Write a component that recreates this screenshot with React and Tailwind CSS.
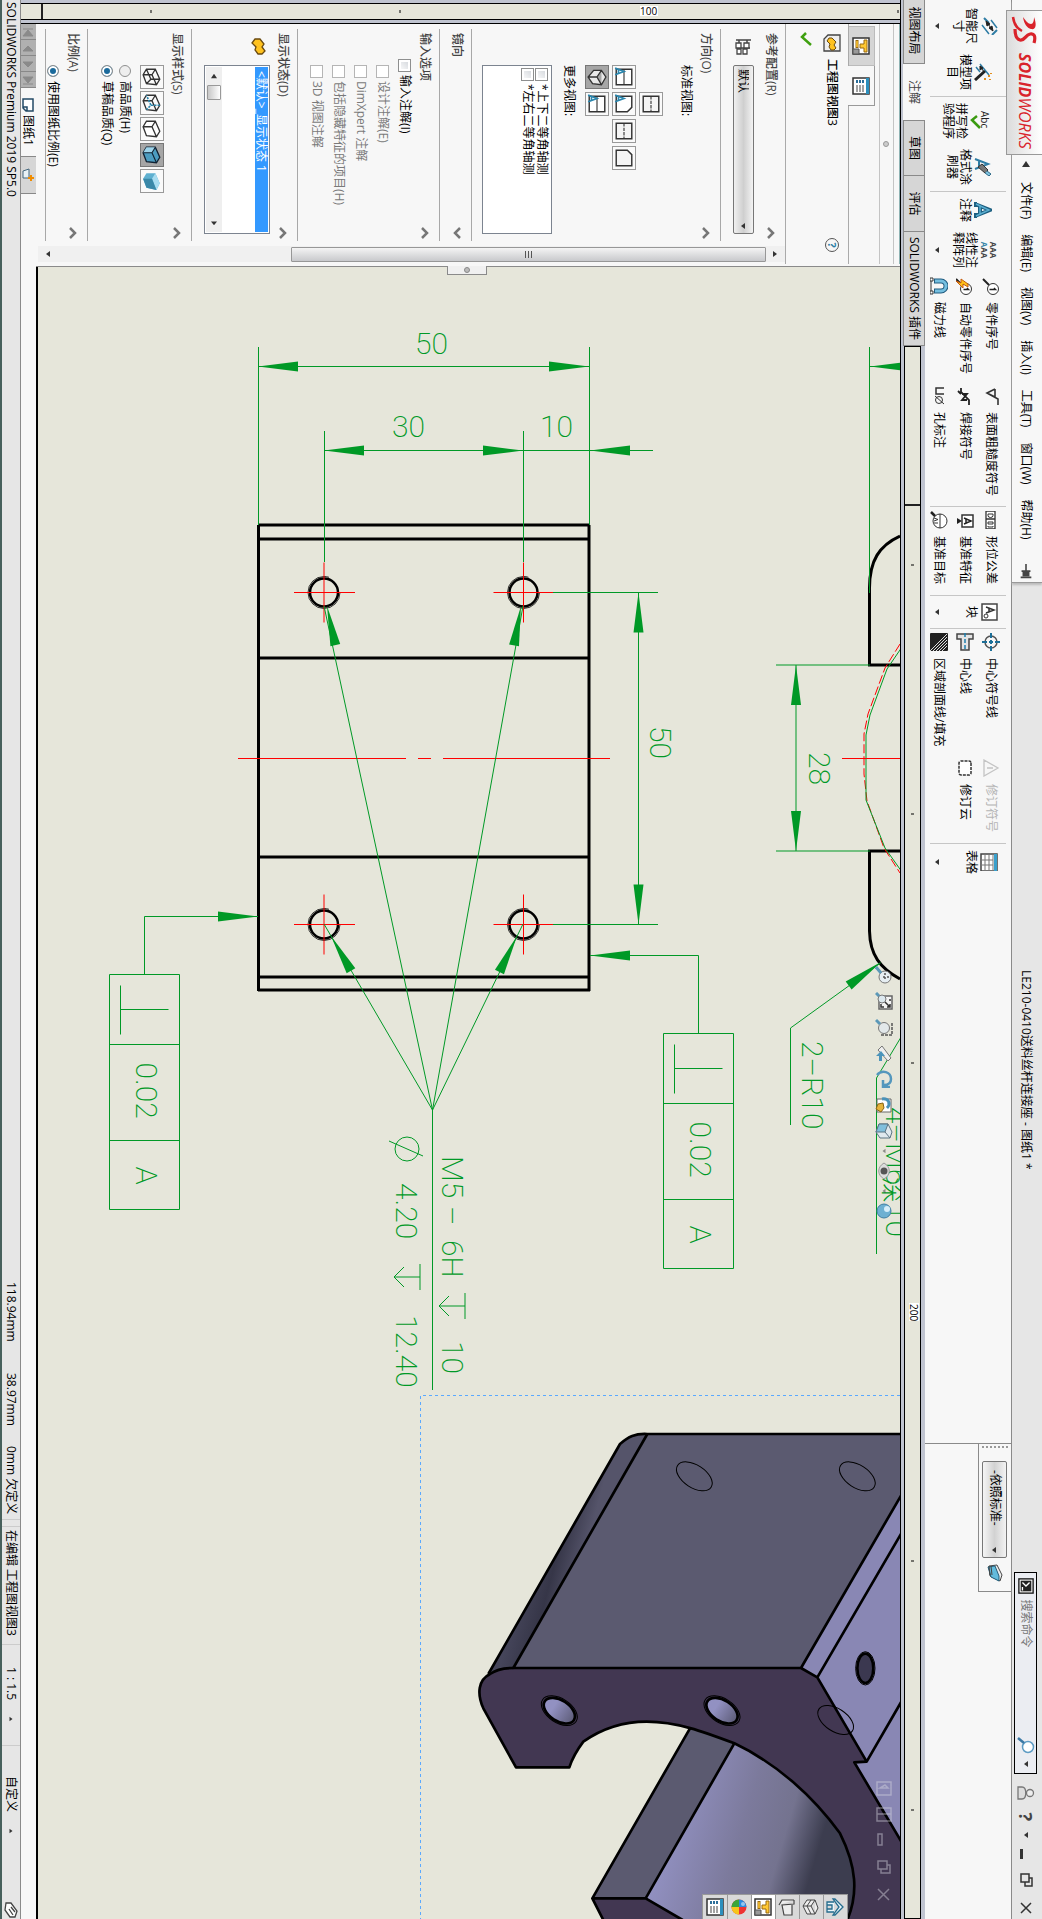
import React from "react";
import clsx from "clsx";

const ICONS = {
  dim: (
    <>
      <path d="M1 14L6 9M13 1l5 5" stroke="#2f7da5" strokeWidth="2" />
      <path d="M3 7l8-6M8 16l9-7" stroke="#2f7da5" strokeWidth="1.5" />
      <path d="M5 11L13 6M4 12l5-1-2-3zM14 5l-5 1 2 3z" stroke="#222" fill="#222" />
    </>
  ),
  wand: (
    <>
      <path d="M1 12L12 3M4 16l5-4" stroke="#2f7da5" strokeWidth="1.5" />
      <path d="M3 12l6-4M3 12l4 0-2-3z" stroke="#222" fill="#222" />
      <path d="M8 7l9 10" stroke="#222" strokeWidth="3" />
      <path d="M12 3h2M15 7h2M10 1h1M16 2h1" stroke="#e58f1c" strokeWidth="2" />
    </>
  ),
  brush: (
    <>
      <path d="M1 17L6 4l5 13M3 13h6" stroke="#2f7da5" strokeWidth="2" />
      <path d="M6 10l6-6 3 3-6 7z" fill="#777" stroke="#333" />
      <path d="M13 5l3-4 2 2-3 4" fill="#7fc3e0" stroke="#2f6a88" />
    </>
  ),
  bigA: (
    <>
      <path d="M1 17h5M12 17h5M3 17L9 2l6 15M5 12h8" stroke="#1d5f80" strokeWidth="4" />
      <path d="M3 16L9 3l6 13M5 12h8" stroke="#5aaed0" strokeWidth="1.5" />
    </>
  ),
  balloon: (
    <>
      <circle cx="12" cy="7" r="5.5" fill="#fff" stroke="#333" />
      <path d="M8 11L2 17" stroke="#222" strokeWidth="2" />
      <path d="M11 6l1.500-1.500v6" stroke="#222" strokeWidth="1.400" />
    </>
  ),
  autoBalloon: (
    <>
      <circle cx="12" cy="8" r="5.500" fill="#fff" stroke="#333" />
      <path d="M8 12L2 18" stroke="#222" strokeWidth="2" />
      <path d="M11 7l1.500-1.500v5" stroke="#222" strokeWidth="1.400" />
      <path d="M7 6l-5 7h4l-2 5 7-7H7l3-5z" fill="#ffc21a" stroke="#c35b12" />
    </>
  ),
  magnet: (
    <>
      <path d="M4 14V7a5 5 0 0110 0v7" stroke="#235d80" strokeWidth="5" />
      <path d="M4 13V7a5 5 0 0110 0v6" stroke="#74bfe0" strokeWidth="3" />
      <path d="M1 17h16" stroke="#333" />
      <path d="M1 15h3v3H1zM14 15h3v3h-3z" fill="#fff" stroke="#333" />
    </>
  ),
  roughness: <path d="M2 5h8L6 13 2 5M6 13L12 2h6" stroke="#333" strokeWidth="1.600" />,
  weld: <path d="M1 13h4l8-8h5M7 12V7l6 5V7M4 16l3-3" stroke="#222" strokeWidth="1.800" />,
  hole: (
    <>
      <path d="M1 4v8h6V4" stroke="#333" strokeWidth="1.500" />
      <circle cx="13" cy="9" r="3.500" stroke="#333" />
      <path d="M9 13l8-9" stroke="#333" />
    </>
  ),
  gtol: (
    <>
      <path d="M0 5h18v9H0zM8 5v9" fill="#fff" stroke="#333" strokeWidth="1.300" />
      <path d="M3 7v5h1.500a2 2.500 0 000-5zM11 7h2v5h-2zM15 7h1v5h-1" stroke="#333" />
    </>
  ),
  datum: (
    <>
      <path d="M4 1h12v11H4z" fill="#fff" stroke="#333" strokeWidth="1.500" />
      <path d="M7 10l3-7 3 7M8 8h4" stroke="#222" strokeWidth="1.500" />
      <path d="M10 12l-3 5h6z" fill="#222" />
    </>
  ),
  datumTarget: (
    <>
      <circle cx="10" cy="8" r="7" fill="#fff" stroke="#333" />
      <path d="M3 8h14M7 14l1.500-4 1.500 4M12 10v4" stroke="#333" />
      <path d="M5 13l-4 4" stroke="#222" strokeWidth="2.500" />
    </>
  ),
  block: (
    <>
      <path d="M1 1h16v15H1z" fill="#fff" stroke="#444" strokeWidth="1.500" />
      <path d="M4 12l3-8 3 8M5 9h4" stroke="#333" strokeWidth="1.500" />
      <circle cx="13" cy="12" r="2" stroke="#333" />
    </>
  ),
  centerMark: (
    <>
      <circle cx="9" cy="9" r="6" stroke="#555" strokeWidth="1.500" />
      <path d="M9 0v5M9 13v5M0 9h5M13 9h5M7 9h4M9 7v4" stroke="#1c6f98" strokeWidth="2" />
    </>
  ),
  centerLine: (
    <>
      <path d="M1 1h5v4h11v8H6v4H1z" fill="#e4e4e4" stroke="#444" strokeWidth="1.500" />
      <path d="M0 9h18" stroke="#1c7fae" strokeWidth="1.500" strokeDasharray="4 2" />
    </>
  ),
  hatch: (
    <>
      <rect width="18" height="18" rx="1" fill="#222" />
      <path d="M1 1l17 17M4 1l14 14M7 1l11 11M10 1l8 8M13 1l5 5" stroke="#ddd" strokeWidth="1" />
    </>
  ),
  revSymbol: <path d="M9 2l8 14H1zM9 7v6" stroke="#c4c4c4" strokeWidth="1.300" />,
  cloud: <rect x="2" y="3" width="14" height="12" rx="2" fill="#fff" stroke="#333" strokeWidth="1.500" strokeDasharray="3 1" />,
  table: (
    <>
      <rect x="1" y="1" width="17" height="16" fill="#fff" stroke="#444" strokeWidth="1.500" />
      <path d="M1 1h17v3H1z" fill="#3aa0cc" />
      <path d="M1 5h17M1 9h17M1 13h17M7 5v12M12 5v12" stroke="#777" />
    </>
  ),
  sheetView: (
    <>
      <rect x="1" y="1" width="16" height="16" fill="#fff" stroke="#333" strokeWidth="1.500" />
      <path d="M3 3h12v3h-4v4H7V6H3z" fill="#ffc832" stroke="#9a6a10" />
      <path d="M3 13h8" stroke="#9a6a10" strokeWidth="3" />
      <path d="M4 13h6" stroke="#ffc832" strokeWidth="1.500" />
      <path d="M12 11h5v6h-5z" fill="#999" stroke="#555" />
    </>
  ),
  props: (
    <>
      <rect x="1" y="1" width="16" height="16" fill="#fff" stroke="#333" strokeWidth="1.500" />
      <path d="M1 1h16v3H1z" fill="#2c8fbd" />
      <path d="M3 7h3M3 10h3M3 13h3" stroke="#2c6f9a" strokeWidth="2" />
      <path d="M8 7h7M8 10h7M8 13h7" stroke="#444" />
    </>
  ),
  part: (
    <path d="M2 8l5-4 3 2 4-3 3 3v4l-4 3-3-1-4 4-4-3z" fill="#ffc21f" stroke="#6a4a10" strokeWidth="1.300" />
  ),
  partView: (
    <>
      <path d="M1 1h16v16H5l-4-4z" fill="#eee" stroke="#444" strokeWidth="1.300" />
      <path d="M4 9l4-4 3 2 3-2 2 2v3l-3 2-3-1-3 3-3-2z" fill="#ffc21f" stroke="#6a4a10" />
    </>
  ),
  config: (
    <>
      <path d="M2 1v15M2 5h4M2 13h4M10 2v12" stroke="#444" strokeWidth="1.500" />
      <path d="M5 3h5v5H5zM5 11h5v5H5zM11 5h5v4h-5zM11 11h5v4h-5z" fill="#fff" stroke="#444" strokeWidth="1.300" />
    </>
  ),
  viewTop: (
    <>
      <path d="M2 2h14v14H2z" fill="#f4f4f4" stroke="#333" strokeWidth="1.300" />
      <path d="M2 9h14" stroke="#333" strokeDasharray="3 1" />
    </>
  ),
  viewA: (
    <>
      <path d="M2 2h14v14H2z" fill="#fff" stroke="#333" strokeWidth="1.300" />
      <path d="M2 9h14" stroke="#333" />
      <path d="M1 17l3-8 3 8M2 14h4" stroke="#2b86ad" strokeWidth="1.500" />
    </>
  ),
  viewFront: (
    <>
      <path d="M2 2h10l4 4v10H2z" fill="#fff" stroke="#333" strokeWidth="1.300" />
      <path d="M1 17l3-8 3 8M2 14h4" stroke="#2b86ad" strokeWidth="1.500" />
    </>
  ),
  viewCut: <path d="M6 2h10v14H2V6z" fill="#f4f4f4" stroke="#333" strokeWidth="1.300" />,
  iso: <path d="M9 1l7 4-1 8-6 4-6-5V5zM3 5l6 4 7-4M9 9v8" fill="#e8e8e8" stroke="#333" strokeWidth="1.200" />,
  cubeWire: <path d="M2 6l9-4 5 3-1 9-8 3-5-3zM2 6l5 3 9-4M7 9v8M11 2v8l4 4M11 10l-9 4" stroke="#333" strokeWidth="1.200" />,
  cubeDash: (
    <>
      <path d="M2 6l9-4 5 3-1 9-8 3-5-3zM2 6l5 3 9-4M7 9v8" stroke="#333" strokeWidth="1.200" />
      <path d="M11 2v8l4 4M11 10l-9 4" stroke="#2b86ad" strokeWidth="1.500" strokeDasharray="2 1" />
    </>
  ),
  cubePlain: <path d="M2 6l9-4 5 3-1 9-8 3-5-3zM2 6l5 3 9-4M7 9v8" fill="#fff" stroke="#333" strokeWidth="1.200" />,
  cubeEdge: (
    <>
      <path d="M2 6l9-4 5 3-1 9-8 3-5-3z" fill="#4c9cc0" stroke="#123" strokeWidth="1.200" />
      <path d="M2 6l5 3v8l-5-3z" fill="#9fd4ea" />
      <path d="M2 6l5 3 9-4M7 9v8" stroke="#123" />
    </>
  ),
  cubeShade: (
    <>
      <path d="M2 6l9-4 6 3-2 9-8 3-5-3z" fill="#5fb0d0" />
      <path d="M2 6l9-4 6 3-10 4z" fill="#a8dcf0" />
      <path d="M7 9l10-4-2 9-8 3z" fill="#3a88a8" />
    </>
  ),
  cubeStyle: (
    <>
      <path d="M2 5l8-4 6 2v10l-6 4-8-3z" fill="#dfe9ee" stroke="#5b7482" />
      <path d="M2 5l8 3v9l-8-3z" fill="#7fbfdc" stroke="#5b7482" />
      <path d="M10 8l6-5" stroke="#5b7482" />
    </>
  ),
  layers: (
    <>
      <path d="M1 7l10-5 6 2-5 10-10 1z" fill="#eee" stroke="#444" />
      <path d="M2 9l10-4 5 0-4 8-10 3z" fill="#62bbdc" stroke="#235d78" />
      <path d="M2 13l9-1M2 15l9-1" stroke="#444" />
    </>
  ),
  user: (
    <>
      <circle cx="9" cy="5" r="3.500" fill="#eee" stroke="#777" strokeWidth="1.300" />
      <path d="M3 17v-4c0-5 12-5 12 0v4z" fill="#ddd" stroke="#777" strokeWidth="1.300" />
    </>
  ),
  search: (
    <>
      <circle cx="10" cy="7" r="5.500" fill="#fff" stroke="#5e9cc4" strokeWidth="1.500" />
      <path d="M6 11l-5 6" stroke="#3c7aa6" strokeWidth="2.500" />
    </>
  ),
  prompt: (
    <>
      <rect x="1" y="1" width="16" height="16" fill="#fff" stroke="#111" strokeWidth="1.500" />
      <rect x="3" y="3" width="12" height="12" fill="#222" />
      <path d="M5 5l4 4-4 4M10 13h4" stroke="#fff" strokeWidth="1.500" />
    </>
  ),
  pin: <path d="M0 9h7M8 4v10M8 6h5v6H8zM15 3v12" stroke="#444" fill="#444" strokeWidth="1.800" />,
  home: <path d="M1 9l8-8 8 8v2L9 5l-8 6zM4 10v7h10v-7M7 17v-5h4v5" fill="#e9f6fb" stroke="#256c8d" strokeWidth="1.300" />,
  books: <path d="M2 5l8-3 6 3-8 4zM2 5v8l6 4 8-4V5M2 9l6 4 8-4M8 9v8" fill="#eee" stroke="#444" />,
  folder: <path d="M2 2h4l1 12 10-2V4H7M2 2v12l5 3" fill="#eee" stroke="#444" strokeWidth="1.200" />,
  ball: (
    <>
      <circle cx="9" cy="9" r="7.500" fill="#e33" />
      <path d="M9 9V1.500A7.500 7.500 0 001.500 9z" fill="#2a8adf" />
      <path d="M9 9H1.500A7.500 7.500 0 009 16.500z" fill="#3aa53a" />
      <path d="M9 9v7.500A7.500 7.500 0 0016.500 9z" fill="#f6c51c" />
      <circle cx="6" cy="5" r="2" fill="#fff" opacity=".5" />
    </>
  ),
  lens: (
    <>
      <circle cx="11" cy="8" r="6" fill="#e6eef2" stroke="#777" />
      <path d="M7 12L1 17" stroke="#5b98b8" strokeWidth="3" />
      <path d="M11 4v8M7 8h8" stroke="#555" strokeDasharray="2 2" strokeWidth="1.500" />
    </>
  ),
  fit: (
    <>
      <rect x="4" y="1" width="13" height="13" fill="#f3f3f3" stroke="#666" strokeWidth="1.500" />
      <path d="M10 8l5-5M15 9v3h-3M7 3h2M12 3h3v3" stroke="#333" strokeWidth="1.500" />
      <circle cx="7" cy="11" r="4" fill="#dce8ee" stroke="#777" />
      <path d="M4 14L1 17" stroke="#5b98b8" strokeWidth="3" />
    </>
  ),
  area: (
    <>
      <path d="M5 1h12v12" stroke="#555" strokeWidth="1.500" strokeDasharray="3 1" />
      <circle cx="10" cy="9" r="5.500" fill="#e2e8ea" stroke="#777" />
      <path d="M6 13l-4 4" stroke="#5b98b8" strokeWidth="3" />
    </>
  ),
  prev: (
    <>
      <path d="M2 11L14 2l3 3L6 15z" fill="#eee" stroke="#777" />
      <path d="M17 14h-5v3l-5-5 5-4v3h5z" fill="#4c94ba" />
    </>
  ),
  rotate: <path d="M5 16c-6-5-3-14 4-14 4 0 6 3 6 7M17 3v7h-7" stroke="#5497bd" strokeWidth="2.500" />,
  view3d: (
    <>
      <path d="M3 2h13v14H3z" fill="#fff" stroke="#666" />
      <path d="M3 11c-1-7 5-9 9-5" stroke="#4a92b8" strokeWidth="3" />
      <path d="M7 10l5-1 4 3-3 5-5-2z" fill="#e5b43c" stroke="#8a6414" />
    </>
  ),
  eye: (
    <>
      <path d="M1 9c4-7 12-7 16 0-4 7-12 7-16 0z" fill="#ddd" stroke="#999" />
      <circle cx="9" cy="9" r="3.500" fill="#555" />
    </>
  ),
  sphere: (
    <>
      <circle cx="9" cy="9" r="7" fill="#6db0d2" stroke="#3f7fa3" />
      <circle cx="7" cy="6" r="3" fill="#d6eefa" />
    </>
  ),
};

function Icon({ name, className = "size-[18px]" }) {
  return (
    <svg viewBox="0 0 18 18" fill="none" className={clsx("block shrink-0", className)} aria-hidden="true">
      {ICONS[name]}
    </svg>
  );
}

function Caret({ dir = "down", className = "size-2" }) {
  const paths = { down: "M1 2h6L4 6z", up: "M1 6h6L4 2z", left: "M7 0v8L1 4z", right: "M2 0v8l5-4z" };
  return (
    <svg viewBox="0 0 8 8" className={clsx("block shrink-0 fill-[#333]", className)} aria-hidden="true">
      <path d={paths[dir]} />
    </svg>
  );
}

const MENUS = ["文件(F)", "编辑(E)", "视图(V)", "插入(I)", "工具(T)", "窗口(W)", "帮助(H)"];

function TitleBar() {
  return (
    <header className="flex h-[31px] shrink-0 items-stretch border-b border-[#8a8a8a] bg-[#e6e6e6]">
      <div className="flex w-[583px] items-center border-r border-[#999] bg-[#f7f7f7] pt-[2px] pl-[10px] shadow-[2px_0_2px_#bbb]">
        <div className="z-10 mb-[-3px] flex h-[36px] w-[145px] items-center gap-[9px] border border-t-0 border-[#999] bg-linear-to-b from-white to-[#dcdcdc] pl-[5px]">
          <svg viewBox="0 0 28 27" fill="none" className="h-[27px] w-7" aria-hidden="true">
            <path d="M1 4c8-3 13-2 12 3-1 4-5 7-12 8 4-3 7-5 7-8 0-2-3-3-7-3z" fill="#d9232b" />
            <path d="M1 25c8-1 12-5 14-9" stroke="#d9232b" strokeWidth="2.500" />
            <path d="M27 4c-7-2-10 0-9 4 1 5 7 5 6 10-1 4-5 5-11 5" stroke="#d9232b" strokeWidth="3.200" />
          </svg>
          <span className="text-[16px] leading-none text-[#d9232b] italic [font-family:'Open_Sans',sans-serif]">
            <b>SOLID</b>WORKS
          </span>
        </div>
        <Caret dir="left" className="ml-[5px] h-3 w-2" />
        <nav className="ml-[14px] flex gap-[15px]">
          {MENUS.map((m) => (
            <button key={m} type="button" className="whitespace-nowrap">
              {m}
            </button>
          ))}
        </nav>
        <button type="button" aria-label="固定" className="ml-6">
          <Icon name="pin" className="size-4" />
        </button>
      </div>
      <div className="flex flex-1 items-center justify-end gap-[10px] pt-[2px] pr-1">
        <h1 className="mr-auto ml-[387px] whitespace-nowrap">LE210-0410送料丝杆连接座 - 图纸1 *</h1>
        <label className="flex h-[23px] w-[202px] items-center gap-[5px] border border-black bg-[#ebedf2] px-[5px]">
          <Icon name="prompt" className="size-4" />
          <input aria-label="搜索命令" placeholder="搜索命令" className="min-w-0 flex-1 outline-none placeholder:text-[#777]" />
          <Icon name="search" />
          <Caret />
        </label>
        <button type="button" aria-label="登录">
          <Icon name="user" />
        </button>
        <button type="button" className="text-[18px] leading-none font-bold text-[#444]">
          ?
        </button>
        <Caret />
        <button type="button" aria-label="最小化" className="mt-2 h-[3px] w-[10px] bg-[#333]" />
        <button type="button" aria-label="还原" className="ml-1">
          <svg viewBox="0 0 14 14" fill="none" stroke="#333" strokeWidth="1.500" className="size-[14px]">
            <path d="M1 4h8v8H1zM5 4V1h8v7H9" />
          </svg>
        </button>
        <button type="button" aria-label="关闭" className="ml-1">
          <svg viewBox="0 0 14 14" fill="none" stroke="#333" strokeWidth="1.500" className="size-[14px]">
            <path d="M2 2l10 10M12 2L2 12" />
          </svg>
        </button>
      </div>
    </header>
  );
}

function BigTool({ icon, text, drop, width = "w-9", children }) {
  return (
    <button type="button" className={clsx("flex shrink-0 flex-col items-center", width, drop ? "pt-[13px]" : "pt-[19px]")}>
      {children || <Icon name={icon} />}
      <span className="mt-[2px] leading-[13px] whitespace-pre">{text}</span>
      {drop && <Caret className="mt-auto mb-2 size-2" />}
    </button>
  );
}

function ToolColumn({ items, className }) {
  return (
    <div className={clsx("flex shrink-0 flex-col pt-[7px]", className)}>
      {items.map(([icon, label, off]) => (
        <button
          key={label}
          type="button"
          disabled={!!off}
          className="flex h-[26px] items-center gap-[7px] whitespace-nowrap disabled:text-[#b5b5b5]"
        >
          <Icon name={icon} />
          {label}
        </button>
      ))}
    </div>
  );
}

function Sep({ className }) {
  return <div className={clsx("my-[5px] w-px shrink-0 bg-[#c6c6c6]", className)} />;
}

function Ribbon() {
  return (
    <div className="flex h-[86px] shrink-0 items-start bg-[#f7f7f7]">
      <div className="flex h-full w-[1444px] items-stretch border-r border-[#8a8a8a] pl-2">
        <BigTool icon="dim" text={"智能尺\n寸"} drop />
        <div className="w-[10px]" />
        <BigTool icon="wand" text={"模型项\n目"} />
        <Sep className="mx-[6px]" />
        <BigTool text={"拼写检\n验程序"}>
          <svg viewBox="0 0 28 22" className="h-[22px] w-7" fill="none">
            <text x="4" y="11" fontSize="10" fill="#222">
              Abc
            </text>
            <path d="M9 15l4 5 8-8" stroke="#3b9b12" strokeWidth="2.500" />
          </svg>
        </BigTool>
        <div className="w-[10px]" />
        <BigTool icon="brush" text={"格式涂\n刷器"} />
        <Sep className="mx-[6px]" />
        <BigTool icon="bigA" text="注释" width="w-6" />
        <div className="w-[10px]" />
        <BigTool text={"线性注\n释阵列"} drop>
          <span className="flex h-[18px] flex-col items-center text-[8px] leading-[9px] font-bold text-[#444]">
            AAA
            <span>
              <span className="text-[#3a86a8]">A</span>AA
            </span>
          </span>
        </BigTool>
        <ToolColumn
          className="ml-[9px] w-[110px]"
          items={[["balloon", "零件序号"], ["autoBalloon", "自动零件序号"], ["magnet", "磁力线"]]}
        />
        <ToolColumn
          className="w-[118px]"
          items={[["roughness", "表面粗糙度符号"], ["weld", "焊接符号"], ["hole", "孔标注"]]}
        />
        <Sep className="ml-[1px]" />
        <ToolColumn className="ml-1 w-[84px]" items={[["gtol", "形位公差"], ["datum", "基准特征"], ["datumTarget", "基准目标"]]} />
        <Sep />
        <BigTool icon="block" text="块" width="w-8" drop />
        <Sep />
        <ToolColumn
          className="ml-1 w-[126px]"
          items={[["centerMark", "中心符号线"], ["centerLine", "中心线"], ["hatch", "区域剖面线/填充"]]}
        />
        <ToolColumn className="w-[84px]" items={[["revSymbol", "修订符号", true], ["cloud", "修订云"]]} />
        <Sep />
        <BigTool icon="table" text="表格" width="w-9" drop />
      </div>
      <div className="flex h-[33px] w-[148px] items-center border-r border-b border-[#8a8a8a] pl-[2px]">
        <div className="mr-3 h-[26px] w-[3px] border-l-2 border-dotted border-[#999]" />
        <div className="relative">
          <select
            aria-label="图层"
            className="block h-[25px] w-[97px] appearance-none rounded-[2px] border border-[#777] bg-linear-to-b from-[#f3f3f3] via-[#d2d2d2] to-[#f5f5f5] pl-2"
          >
            <option>-依照标准-</option>
          </select>
          <Caret className="pointer-events-none absolute top-[9px] right-1 size-2" />
        </div>
        <button type="button" aria-label="图层属性" className="ml-[6px]">
          <Icon name="layers" />
        </button>
      </div>
    </div>
  );
}

const TABS = ["视图布局", "注解", "草图", "评估", "SOLIDWORKS 插件"];
const TICKS = [218, 467, 716, 965, 1214, 1463];

function TabStrip() {
  return (
    <div className="flex h-[25px] shrink-0 border-b border-black bg-[#c0c4d0]">
      <div role="tablist" className="mb-[2px] flex h-[22px] shrink-0">
        {TABS.map((t, i) => (
          <button
            key={t}
            type="button"
            role="tab"
            aria-selected={i === 1}
            className={clsx(
              "flex items-center justify-center whitespace-nowrap",
              i === 1 ? "w-14 bg-[#f7f7f7] text-[#444]" : "border-r border-b border-t border-[#8a8a8a] bg-[#d6d6d6]",
              i === 0 && "w-16 pr-[2px]",
              (i === 2 || i === 3) && "w-14",
              i === 2 && "border-l",
              i === 4 && "w-[114px]"
            )}
          >
            {t}
          </button>
        ))}
      </div>
      <div className="mt-1 mb-[3px] h-[17px] flex-1 border border-black bg-[#e6e6da]">
        <svg className="block h-[15px] w-full" aria-hidden="true">
          <path d="M158 0v15" stroke="#222" strokeWidth="2" />
          {TICKS.map((x) => (
            <path key={x} d={`M${x} 6v3`} stroke="#000" />
          ))}
          <rect x="956" y="1" width="18" height="10" fill="#fff" />
          <text x="957" y="10" fontSize="10">
            200
          </text>
        </svg>
      </div>
    </div>
  );
}

function SideRuler() {
  return (
    <div className="flex w-6 shrink-0 border-r border-black bg-[#c0c4d0] pr-[3px] pl-[3px]">
      <div className="w-[17px] border-x border-black bg-[#e6e6da]">
        <svg className="block h-full w-[15px]" aria-hidden="true">
          <path d="M6 2h3M6 251h3M6 500h3M6 749h3" stroke="#000" />
          <path d="M0 858h15" stroke="#222" strokeWidth="2" />
          <rect x="2" y="242" width="10" height="18" fill="#fff" />
          <text transform="translate(11 260) rotate(-90)" fontSize="10">
            100
          </text>
        </svg>
      </div>
    </div>
  );
}

function Section({ title, closed, className, children }) {
  return (
    <section className={clsx("mx-[5px] border-b border-[#a8a8a8]", className)}>
      <h3 className="flex h-[27px] items-center justify-between pr-[2px] pl-1 font-medium text-[#444]">
        {title}
        <svg viewBox="0 0 12 12" fill="none" stroke="#777" strokeWidth="2.500" className="size-3">
          <path d={closed ? "M1 3l5 5 5-5" : "M1 9l5-5 5 5"} />
        </svg>
      </h3>
      {children}
    </section>
  );
}

function Check({ label, disabled }) {
  return (
    <label className={clsx("flex h-[14px] items-center gap-[3px] whitespace-nowrap", disabled && "text-[#7a7a7a]")}>
      <input
        type="checkbox"
        disabled={disabled}
        className={clsx(
          "size-[13px] shrink-0 appearance-none border bg-linear-to-br",
          disabled ? "border-[#b5b5b5] from-white to-white" : "border-[#8e8f8f] from-[#cfd3d8] to-white shadow-[inset_0_0_0_2px_#fff]"
        )}
      />
      {label}
    </label>
  );
}

function Radio({ name, label, checked }) {
  return (
    <label className="flex h-[14px] items-center gap-1 whitespace-nowrap">
      <input
        type="radio"
        name={name}
        defaultChecked={checked}
        className="size-3 shrink-0 appearance-none rounded-full border border-[#8e8f8f] bg-[#eee] checked:bg-[#1a6a9c] checked:shadow-[inset_0_0_0_2px_#fff]"
      />
      {label}
    </label>
  );
}

function IconButton({ icon, label, active }) {
  return (
    <button
      type="button"
      aria-label={label}
      className={clsx(
        "flex size-6 items-center justify-center border",
        active ? "border-[#777] bg-[#a6a6a6]" : "border-[#999] bg-[#fafafa]"
      )}
    >
      <Icon name={icon} className="size-5" />
    </button>
  );
}

function PropertyPanel() {
  return (
    <aside className="flex w-[243px] shrink-0 flex-col border-r border-[#8a8a8a] bg-[#f7f7f7] pr-[2px]">
      <div className="h-[6px] border-t border-[#8fb4b4]" />
      <div className="flex h-[15px] items-center justify-center border-y border-[#c4c4c4]">
        <span className="size-[6px] rounded-full border border-[#999] bg-[#ccc]" />
      </div>
      <div className="mt-1 flex h-[27px] border-b border-[#aaa] pl-[2px]">
        <button type="button" aria-label="工程图" className="flex w-10 items-center justify-center border border-b-0 border-[#bbb] bg-[#d5d5d5]">
          <Icon name="sheetView" />
        </button>
        <button
          type="button"
          aria-label="属性"
          className="-mb-px flex w-10 items-center justify-center border-t border-r border-[#999] bg-[#f7f7f7]"
        >
          <Icon name="props" />
        </button>
      </div>
      <div className="h-[63px] border-b border-[#aaa] pr-3 pl-2">
        <div className="flex h-[31px] items-center gap-[7px] pl-[2px]">
          <Icon name="partView" />
          <h2 className="font-medium">工程图视图3</h2>
          <button
            type="button"
            className="ml-auto flex size-[14px] items-center justify-center rounded-full border border-[#555] text-[11px] leading-none font-bold text-[#2f7da5]"
          >
            ?
          </button>
        </div>
        <button type="button" aria-label="确定" className="mt-[5px] block">
          <svg viewBox="0 0 14 12" fill="none" stroke="#3fa010" strokeWidth="2.500" className="h-3 w-[14px]">
            <path d="M1 6l4 4 8-9" />
          </svg>
        </button>
      </div>

      <div className="flex min-h-0 flex-1">
        <div className="h-full w-[222px] overflow-hidden">
          <Section title="参考配置(R)" className="pb-3">
            <div className="flex items-center gap-[9px] pt-1 pl-[9px]">
              <Icon name="config" />
              <div className="relative">
                <select
                  aria-label="参考配置"
                  className="block h-[21px] w-[169px] appearance-none rounded-[2px] border border-[#777] bg-linear-to-b from-[#f3f3f3] via-[#cfcfcf] to-[#f0f0f0] pl-[3px] leading-none"
                >
                  <option>默认</option>
                </select>
                <Caret className="pointer-events-none absolute top-[7px] right-1 size-2" />
              </div>
            </div>
          </Section>

          <Section title="方向(O)" className="pb-[10px]">
            <div className="pl-9">
              <p className="leading-[14px]">标准视图:</p>
              <div className="mt-4 grid w-max grid-cols-4 gap-[3px]">
                <span />
                <IconButton icon="viewTop" label="上视" />
                <span />
                <span />
                <IconButton icon="viewA" label="左视" />
                <IconButton icon="viewFront" label="前视" />
                <IconButton icon="viewTop" label="右视" />
                <IconButton icon="viewCut" label="后视" />
                <IconButton icon="iso" label="等轴测" active />
                <IconButton icon="viewA" label="下视" />
              </div>
              <p className="mt-[9px] leading-[14px]">更多视图:</p>
              <div className="mt-[10px] flex h-[70px] w-[169px] flex-col border border-[#7c8490] bg-white pt-[2px] pl-[2px]">
                <Check label="*上下二等角轴测" />
                <Check label="*左右二等角轴测" />
              </div>
            </div>
          </Section>

          <Section title="镜向" closed className="pb-1" />

          <Section title="输入选项" className="pb-3">
            <div className="flex flex-col gap-2 pl-9">
              <div className="-ml-[6px]">
                <Check label="输入注解(I)" />
              </div>
              <Check label="设计注解(E)" disabled />
              <Check label="DimXpert 注解" disabled />
              <Check label="包括隐藏特征的项目(H)" disabled />
              <Check label="3D 视图注解" disabled />
            </div>
          </Section>

          <Section title="显示状态(D)" className="pb-3">
            <div className="flex gap-[10px] pl-2">
              <Icon name="part" className="mt-[2px] size-[18px]" />
              <div className="flex h-[66px] w-[169px] flex-col border border-[#7c8490] bg-white p-px">
                <div className="bg-[#3399ff] pl-1 leading-[13px] whitespace-pre text-white">{"<默认>_显示状态 1"}</div>
                <div className="mt-auto flex h-4 items-center bg-[#efefef] px-[6px]">
                  <Caret dir="left" className="size-[6px]" />
                  <span className="ml-[6px] h-[14px] w-[15px] rounded-[1px] border border-[#999] bg-linear-to-b from-white to-[#c8c8c8]" />
                  <Caret dir="right" className="ml-auto size-[6px]" />
                </div>
              </div>
            </div>
          </Section>

          <Section title="显示样式(S)" className="pb-3">
            <div className="pl-9">
              <div className="flex gap-[2px]">
                <IconButton icon="cubeWire" label="线架图" />
                <IconButton icon="cubeDash" label="隐藏线可见" />
                <IconButton icon="cubePlain" label="消除隐藏线" />
                <IconButton icon="cubeEdge" label="带边线上色" active />
                <IconButton icon="cubeShade" label="上色" />
              </div>
              <div className="mt-2 flex flex-col gap-1">
                <Radio name="quality" label="高品质(H)" />
                <Radio name="quality" label="草稿品质(Q)" checked />
              </div>
            </div>
          </Section>

          <Section title="比例(A)">
            <div className="flex flex-col gap-1 pl-9">
              <Radio name="scale" label="使用图纸比例(E)" checked />
            </div>
          </Section>
        </div>
        <div className="flex w-4 flex-col items-center bg-[#f0f0f0] py-[6px]">
          <Caret dir="up" />
          <div className="mt-[5px] flex h-[475px] w-[15px] flex-col items-center justify-center gap-[2px] rounded-[1px] border border-[#979797] bg-linear-to-r from-[#f4f4f4] to-[#c8c9cc]">
            <span className="h-px w-[7px] bg-[#555]" />
            <span className="h-px w-[7px] bg-[#555]" />
            <span className="h-px w-[7px] bg-[#555]" />
          </div>
          <Caret className="mt-auto size-2" />
        </div>
      </div>
      <div className="h-[2px]" />
    </aside>
  );
}

const GREEN = "#009926";

// arrow head with its tip at (x, y); a is where the tip points, 0 = right
function Arrow({ x, y, a }) {
  return <path transform={`translate(${x} ${y}) rotate(${a})`} d="M0 0L-40-5v10z" fill={GREEN} stroke="none" />;
}

function Label({ x, y, turn, children }) {
  return (
    <text
      transform={`translate(${x} ${y}) rotate(${turn ? 90 : 0})`}
      fill={GREEN}
      stroke="none"
      fontSize="30"
      fontWeight="200"
      fontFamily="Roboto"
    >
      {children}
    </text>
  );
}

function TappedHole({ x, y }) {
  return (
    <g>
      <circle cx={x} cy={y} r="14" stroke="#000" strokeWidth="2.500" />
      <circle cx={x} cy={y} r="16" stroke="#000" strokeWidth=".8" strokeDasharray="80 20" />
      <path d={`M${x - 30} ${y}h61M${x} ${y - 30}v60`} stroke="red" />
    </g>
  );
}

function TolFrame({ x, y }) {
  return (
    <g>
      <path d={`M${x} ${y}h70v235h-70zM${x} ${y + 70}h70M${x} ${y + 166}h70`} stroke={GREEN} />
      <path d={`M${x + 11} ${y + 11}v49M${x + 11} ${y + 35}h48`} stroke={GREEN} />
      <Label x={x + 26} y={y + 88} turn>
        0.02
      </Label>
      <Label x={x + 26} y={y + 192} turn>
        A
      </Label>
    </g>
  );
}

function DepthMark({ x, y }) {
  return <path d={`M${x + 26} ${y - 13}v26M${x + 26} ${y}h-26M${x + 10} ${y - 10}l-10 10 10 10`} stroke={GREEN} />;
}

function TopView() {
  return (
    <g fill="none">
      <path d="M258 525h332M258 539h332M258 658h332M258 857h332M258 977h332M258 990h332M258.500 525v466M589 525v466" stroke="#000" strokeWidth="3" />
      <TappedHole x={324} y={592.5} />
      <TappedHole x={523.5} y={592.5} />
      <TappedHole x={324} y={924.5} />
      <TappedHole x={523.5} y={924.5} />
      <path d="M238 758.500h168M418 758.500h13M443 758.500h167" stroke="red" />
      <g stroke={GREEN}>
        <path d="M258.500 347v178M589.500 347v178M258 366.500h331M324.500 431v131M523.500 431v131M324 450.500h329" />
        <path d="M553 592.500h105M553 924.500h105M638.500 592v332" />
        <path d="M324 606L432.500 1110 523 606M324 924L432.500 1110 523 924M432.500 1110v280" />
        <path d="M144.500 974.500v-58H258M698.500 1033v-77.500H590" />
      </g>
      <Arrow x={258} y={366.5} a={180} />
      <Arrow x={589} y={366.5} a={0} />
      <Arrow x={324} y={450.5} a={180} />
      <Arrow x={523} y={450.5} a={0} />
      <Arrow x={590} y={450.5} a={180} />
      <Arrow x={638.5} y={592.5} a={-90} />
      <Arrow x={638.5} y={924.5} a={90} />
      <Arrow x={327} y={606} a={-102} />
      <Arrow x={521} y={606} a={-80} />
      <Arrow x={331} y={936} a={-120} />
      <Arrow x={517} y={936} a={-64} />
      <Arrow x={258} y={916.5} a={0} />
      <Arrow x={590} y={955.5} a={180} />
      <Label x={415} y={354}>50</Label>
      <Label x={392} y={437}>30</Label>
      <Label x={540} y={437}>10</Label>
      <Label x={650} y={726} turn>50</Label>
      <TolFrame x={109.5} y={974.5} />
      <TolFrame x={663.5} y={1033.5} />
      <Label x={442} y={1156} turn>M5</Label>
      <Label x={442} y={1206} turn>–</Label>
      <Label x={442} y={1240} turn>6H</Label>
      <DepthMark x={439} y={1306} />
      <Label x={442} y={1341} turn>10</Label>
      <ellipse cx="407" cy="1149" rx="12" ry="12" stroke={GREEN} />
      <path d="M389 1141l34 15" stroke={GREEN} />
      <Label x={396} y={1183} turn>4.20</Label>
      <DepthMark x={394} y={1277} />
      <Label x={396} y={1315} turn>12.40</Label>
    </g>
  );
}

function FrontView() {
  return (
    <g fill="none">
      <path d="M900 536C880 545 869 560 869.500 590v75H901M901 851H869.500v80C870 955 880 968 900 979" stroke="#000" strokeWidth="3" />
      <path d="M869.500 347v246M869 366.500h31M776 665h94M776 851h94M796 665v186" stroke={GREEN} />
      <path d="M900 644l-15 24-17 46-4 20v40l3 27 17 47 16 25" stroke="red" strokeDasharray="9 3" />
      <path d="M902 647l-15 22-17 46-4 20v65l19 48 17 24" stroke={GREEN} />
      <path d="M842 758.500h58" stroke="red" />
      <Arrow x={870} y={366.5} a={180} />
      <Arrow x={796} y={665} a={-90} />
      <Arrow x={796} y={851} a={90} />
      <Label x={809} y={752} turn>28</Label>
      <path d="M790.500 1125v-97l90-65M876.500 1254v-176l24-40" stroke={GREEN} />
      <Arrow x={881} y={962} a={-36} />
      <Label x={802} y={1041} turn>2–R10</Label>
      <g clipPath="url(#sheet)">
        <Label x={886} y={1107} turn>4–M6</Label>
        <text transform="translate(884 1177) rotate(90)" fill={GREEN} fontSize="26" fontWeight="300" fontFamily="Noto Sans CJK SC">
          深
        </text>
        <Label x={886} y={1204} turn>10</Label>
      </g>
    </g>
  );
}

function IsoView() {
  return (
    <g transform="translate(440 1400) scale(.33333)" strokeLinejoin="round">
      <path d="M750 985L883 1030 617 1495H457z" fill="#5b5a70" />
      <path d="M883 1030C1010 1090 1120 1190 1200 1300C1250 1400 1255 1480 1222 1560H728L617 1495z" fill="url(#bore)" />
      <path d="M457 1495H617L728 1560H490z" fill="#423752" />
      <path d="M622 102H1384V285L1083 804H220z" fill="#5b5a70" />
      <path d="M622 102C585 100 565 110 540 132L145 822C170 806 200 804 220 804z" fill="url(#fillet)" />
      <path d="M1384 285L1083 804 1132 832 1280 1085 1243 1087 1384 1325z" fill="#8987b4" />
      <path
        d="M220 804H1083L1132 832 1280 1085 1243 1087 1384 1325V1560H1222C1255 1480 1250 1400 1200 1300C1120 1190 1010 1090 883 1030C790 995 710 965 620 965C540 965 480 990 430 1025Q400 1065 388 1102H228L130 925C110 880 115 840 150 822Q175 804 220 804z"
        fill="#423752"
      />
      <g fill="none" stroke="#000" strokeWidth="8">
        <path d="M1384 102H622C585 100 565 110 540 132L145 822" />
        <path d="M622 102L220 804H1083L1384 285M1083 804L1132 832 1384 400M1132 832L1280 1085 1384 905M1280 1085L1243 1087 1384 1325" />
        <path d="M220 804Q175 804 150 822C115 840 110 880 130 925L228 1102H388Q400 1065 430 1025C480 990 540 965 620 965C710 965 790 995 883 1030C1010 1090 1120 1190 1200 1300C1250 1400 1255 1480 1222 1560" />
        <path d="M750 985L457 1495H617L883 1030M617 1495L728 1560M457 1495L490 1560" />
      </g>
      <g fill="none" stroke="#000" strokeWidth="3">
        <ellipse cx="763" cy="229" rx="60" ry="34" transform="rotate(33 763 229)" />
        <ellipse cx="1252" cy="229" rx="60" ry="34" transform="rotate(33 1252 229)" />
        <ellipse cx="1187" cy="960" rx="60" ry="34" transform="rotate(33 1187 960)" />
        <ellipse cx="358" cy="932" rx="60" ry="36" transform="rotate(33 358 932)" />
        <ellipse cx="846" cy="932" rx="60" ry="36" transform="rotate(33 846 932)" />
        <ellipse cx="1276" cy="805" rx="29" ry="50" />
        <g strokeWidth="8">
          <ellipse cx="358" cy="932" rx="52" ry="31" fill="url(#hole)" transform="rotate(33 358 932)" />
          <ellipse cx="846" cy="932" rx="52" ry="31" fill="url(#hole)" transform="rotate(33 846 932)" />
          <ellipse cx="1276" cy="805" rx="24" ry="44" fill="#3b3850" />
        </g>
      </g>
    </g>
  );
}

// the views are laid out with x running up the sheet, so the whole group is turned a quarter
function DrawingSheet() {
  return (
    <svg viewBox="267 142 1652 863" preserveAspectRatio="xMinYMin slice" className="block h-full w-full" role="img" aria-label="工程图">
      <defs>
        <linearGradient id="bore" x1="0" x2="1" y1="0" y2=".25">
          <stop offset=".2" stopColor="#9291c2" />
          <stop offset=".55" stopColor="#7c7a9c" />
          <stop offset=".75" stopColor="#74738f" />
          <stop offset=".92" stopColor="#3c3d4f" />
        </linearGradient>
        <linearGradient id="fillet" x1=".3" x2=".6" y1=".4" y2=".52">
          <stop offset="0" stopColor="#45455a" />
          <stop offset=".5" stopColor="#363648" />
          <stop offset="1" stopColor="#55546a" />
        </linearGradient>
        <linearGradient id="hole">
          <stop offset=".3" stopColor="#9291c2" />
          <stop offset="1" stopColor="#5d5c78" />
        </linearGradient>
        <clipPath id="sheet">
          <rect x="0" y="0" width="900" height="1919" />
        </clipPath>
      </defs>
      <g transform="rotate(-90) translate(-1042 0)">
        <path d="M900 1395.500H420.500V1919" fill="none" stroke="#5aa9ff" strokeDasharray="3 3" />
        <TopView />
        <FrontView />
        <IsoView />
      </g>
    </svg>
  );
}

const HUD = ["lens", "fit", "area", "prev", "rotate", "view3d", "cubeStyle"];
const TASKS = ["home", "books", "folder", "sheetView", "ball", "props"];

function Canvas() {
  return (
    <main className="relative min-w-0 flex-1 bg-[#e6e6da]">
      <DrawingSheet />
      <div className="absolute top-[7px] left-[699px] flex items-center gap-2">
        {HUD.map((n) => (
          <Icon key={n} name={n} />
        ))}
        <Caret className="size-[6px] opacity-50" />
        <Icon name="eye" />
        <Caret className="size-[6px] opacity-50" />
        <Icon name="sphere" />
      </div>
      <svg
        viewBox="0 0 126 16"
        fill="none"
        stroke="#d8d8e0"
        strokeOpacity=".45"
        strokeWidth="1.500"
        className="absolute top-2 right-3 h-4 w-[126px]"
        aria-hidden="true"
      >
        <path d="M1 1h13v14H1zM4 7l3-3v8zM27 1h13v14H27zM33 1v14M53 10h11v4H53zM80 5h8v9h-8zM84 5V2h8v9h-4M108 3l11 11M119 3l-11 11" />
      </svg>
      <div className="absolute top-[52px] right-0 flex flex-col border border-r-0 border-[#999] bg-[#999]">
        {TASKS.map((n, i) => (
          <button
            key={n}
            type="button"
            aria-label={n}
            className={clsx("flex size-6 items-center justify-center border-b border-[#999] last:border-b-0", i === 3 ? "bg-white" : "bg-[#d9d9d9]")}
          >
            <Icon name={n} />
          </button>
        ))}
      </div>
      <div className="absolute top-[413px] -left-px flex h-10 w-[9px] items-center justify-center border border-l-0 border-[#8a8a8a] bg-[#f0f0f0]">
        <span className="size-[6px] rounded-full border border-[#888] bg-[#bbb]" />
      </div>
    </main>
  );
}

function SheetTabs() {
  return (
    <div className="flex h-[15px] shrink-0 bg-[#f7f7f7]">
      {["M10 1v10L4 6zM3 1v10", "M9 1v10L4 6z", "M4 1v10l5-5z", "M3 1v10l6-5zM10 1v10"].map((d) => (
        <button key={d} type="button" aria-label="翻页" className="flex w-4 items-center justify-center border-r border-[#888] bg-[#b0b0b0]">
          <svg viewBox="0 0 12 12" className="size-3 fill-[#8a8a8a] stroke-[#8a8a8a]">
            <path d={d} />
          </svg>
        </button>
      ))}
      <button type="button" className="flex w-[68px] items-center justify-center gap-[3px] leading-none whitespace-nowrap">
        <svg viewBox="0 0 14 12" fill="#fff" stroke="#234a66" strokeWidth="1.500" className="h-3 w-[14px]">
          <path d="M1 1h12v7l-3 3H1zM13 7h-4v4" />
        </svg>
        图纸1
      </button>
      <button type="button" aria-label="添加图纸" className="flex w-[38px] items-center justify-center border-x border-[#888] bg-[#d6d6d6]">
        <svg viewBox="0 0 14 12" fill="#e8f1f6" stroke="#44677d" className="h-3 w-[14px]">
          <path d="M1 5h9v6H3z" />
          <path d="M10 0v6M7 3h6" stroke="#f08c00" strokeWidth="2" />
        </svg>
      </button>
    </div>
  );
}

function StatusBar() {
  return (
    <footer className="flex h-[21px] shrink-0 items-center border-t border-b-2 border-t-[#8a8a8a] border-b-[#47605c] bg-[#e6e6e6] pl-[2px] whitespace-nowrap">
      <span>SOLIDWORKS Premium 2019 SP5.0</span>
      <div className="ml-auto flex h-full items-center">
        <span className="w-[91px]">118.94mm</span>
        <span className="w-[73px]">38.97mm</span>
        <span className="w-[73px]">0mm 欠定义</span>
        <span className="mr-[3px] h-full w-2 border-x border-[#ccc]" />
        <span className="w-[114px]">在编辑 工程图视图3</span>
        <span className="flex h-full w-[102px] items-center gap-4 border-x border-[#ccc] pl-[22px]">
          1 : 1.5
          <Caret dir="up" className="size-[6px]" />
        </span>
        <span className="flex w-[173px] items-center gap-4 pl-[30px]">
          自定义
          <Caret dir="up" className="size-[6px]" />
          <svg viewBox="0 0 18 16" fill="#fff" stroke="#444" strokeWidth="1.300" className="ml-auto h-4 w-[18px]">
            <path d="M2 8l8-6 6 2v5l-7 5-7-1zM6 8l5-4M8 10l6-4" />
          </svg>
        </span>
      </div>
    </footer>
  );
}

export default function App() {
  return (
    <div className="h-screen w-screen overflow-hidden">
      <div className="flex h-[100vw] w-[100vh] origin-top-left translate-x-[100vw] rotate-90 flex-col overflow-hidden bg-[#f7f7f7] text-[12px] leading-4 text-black [font-family:'Open_Sans','Noto_Sans_CJK_SC',sans-serif]">
        <TitleBar />
        <Ribbon />
        <TabStrip />
        <div className="flex min-h-0 flex-1">
          <SideRuler />
          <div className="flex min-w-0 flex-1 flex-col">
            <div className="flex min-h-0 flex-1">
              <PropertyPanel />
              <div className="flex min-w-0 flex-1 border-b-2 border-black">
                <Canvas />
              </div>
            </div>
            <SheetTabs />
          </div>
        </div>
        <StatusBar />
      </div>
    </div>
  );
}
